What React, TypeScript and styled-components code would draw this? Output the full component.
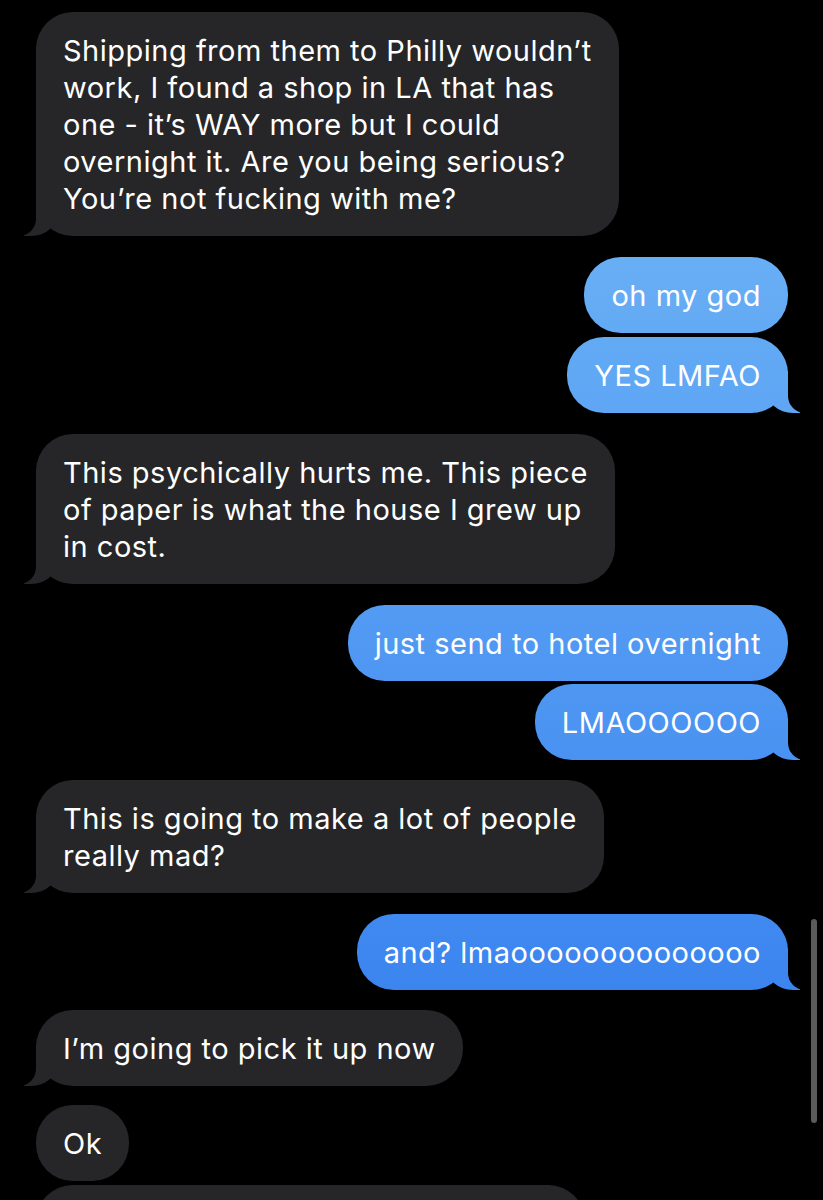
import React from "react";
import styled, { createGlobalStyle, css } from "styled-components";

const Global = createGlobalStyle`
  html, body { margin: 0; padding: 0; background: #000; }
  body {
    font-family: Inter, "Noto Sans", "Liberation Sans", sans-serif;
    -webkit-font-smoothing: antialiased;
  }
`;

const Screen = styled.div`
  position: relative;
  width: 823px;
  height: 1200px;
  overflow: hidden;
  background: #000;
`;

const Thread = styled.div`
  display: flex;
  flex-direction: column;
  padding: 12px 35px 0 36px;
`;

type Side = "in" | "out";

const Row = styled.div<{ $side: Side; $gap: number }>`
  display: flex;
  justify-content: ${(p) => (p.$side === "out" ? "flex-end" : "flex-start")};
  margin-top: ${(p) => p.$gap}px;
`;

const tailOut = css`
  &::before {
    content: "";
    position: absolute;
    bottom: 0;
    right: -12px;
    width: 34px;
    height: 42px;
    background: inherit;
    border-bottom-left-radius: 27px 24px;
  }
  &::after {
    content: "";
    position: absolute;
    bottom: 0;
    right: -44px;
    width: 44px;
    height: 42px;
    background: #000;
    border-bottom-left-radius: 17px;
  }
`;

const tailIn = css`
  &::before {
    content: "";
    position: absolute;
    bottom: 0;
    left: -12px;
    width: 34px;
    height: 42px;
    background: inherit;
    border-bottom-right-radius: 27px 24px;
  }
  &::after {
    content: "";
    position: absolute;
    bottom: 0;
    left: -44px;
    width: 44px;
    height: 42px;
    background: #000;
    border-bottom-right-radius: 17px;
  }
`;

const Bubble = styled.div<{ $side: Side; $tail: boolean; $width?: number }>`
  position: relative;
  box-sizing: border-box;
  padding: 19.5px 27px;
  border-radius: 37px;
  font-size: 29px;
  line-height: 37px;
  letter-spacing: 0.5px;
  color: #fff;
  white-space: pre;
  min-height: 76px;
  ${(p) => (p.$width ? `width: ${p.$width}px;` : "")}
  background: ${(p) =>
    p.$side === "out"
      ? "linear-gradient(180deg, #77bdf7 0px, #2f79ee 1200px) fixed"
      : "#262628"};
  ${(p) => (p.$tail ? (p.$side === "out" ? tailOut : tailIn) : "")}
`;

const ScrollIndicator = styled.div`
  position: absolute;
  left: 811px;
  top: 919px;
  width: 6px;
  height: 204px;
  border-radius: 3px;
  background: #5b5b5b;
  z-index: 2;
`;

type Msg = { side: Side; text: string; gap: number; tail: boolean; width?: number };

const messages: Msg[] = [
  {
    side: "in",
    gap: 0,
    tail: true,
    text:
      "Shipping from them to Philly wouldn\u2019t\nwork, I found a shop in LA that has\none - it\u2019s WAY more but I could\novernight it. Are you being serious?\nYou\u2019re not fucking with me?",
  },
  { side: "out", gap: 21, tail: false, text: "oh my god" },
  { side: "out", gap: 4, tail: true, text: "YES LMFAO" },
  {
    side: "in",
    gap: 21,
    tail: true,
    text: "This psychically hurts me. This piece\nof paper is what the house I grew up\nin cost.",
  },
  { side: "out", gap: 21, tail: false, text: "just send to hotel overnight" },
  { side: "out", gap: 3, tail: true, text: "LMAOOOOOO" },
  { side: "in", gap: 20, tail: true, text: "This is going to make a lot of people\nreally mad?" },
  { side: "out", gap: 21, tail: true, text: "and? lmaoooooooooooooo" },
  { side: "in", gap: 20, tail: true, text: "I\u2019m going to pick it up now" },
  { side: "in", gap: 19, tail: false, text: "Ok" },
  { side: "in", gap: 4, tail: true, text: "", width: 549 },
];

export default function App() {
  return (
    <Screen>
      <Global />
      <Thread>
        {messages.map((m, i) => (
          <Row key={i} $side={m.side} $gap={m.gap}>
            <Bubble $side={m.side} $tail={m.tail} $width={m.width}>
              {m.text}
            </Bubble>
          </Row>
        ))}
      </Thread>
      <ScrollIndicator />
    </Screen>
  );
}
